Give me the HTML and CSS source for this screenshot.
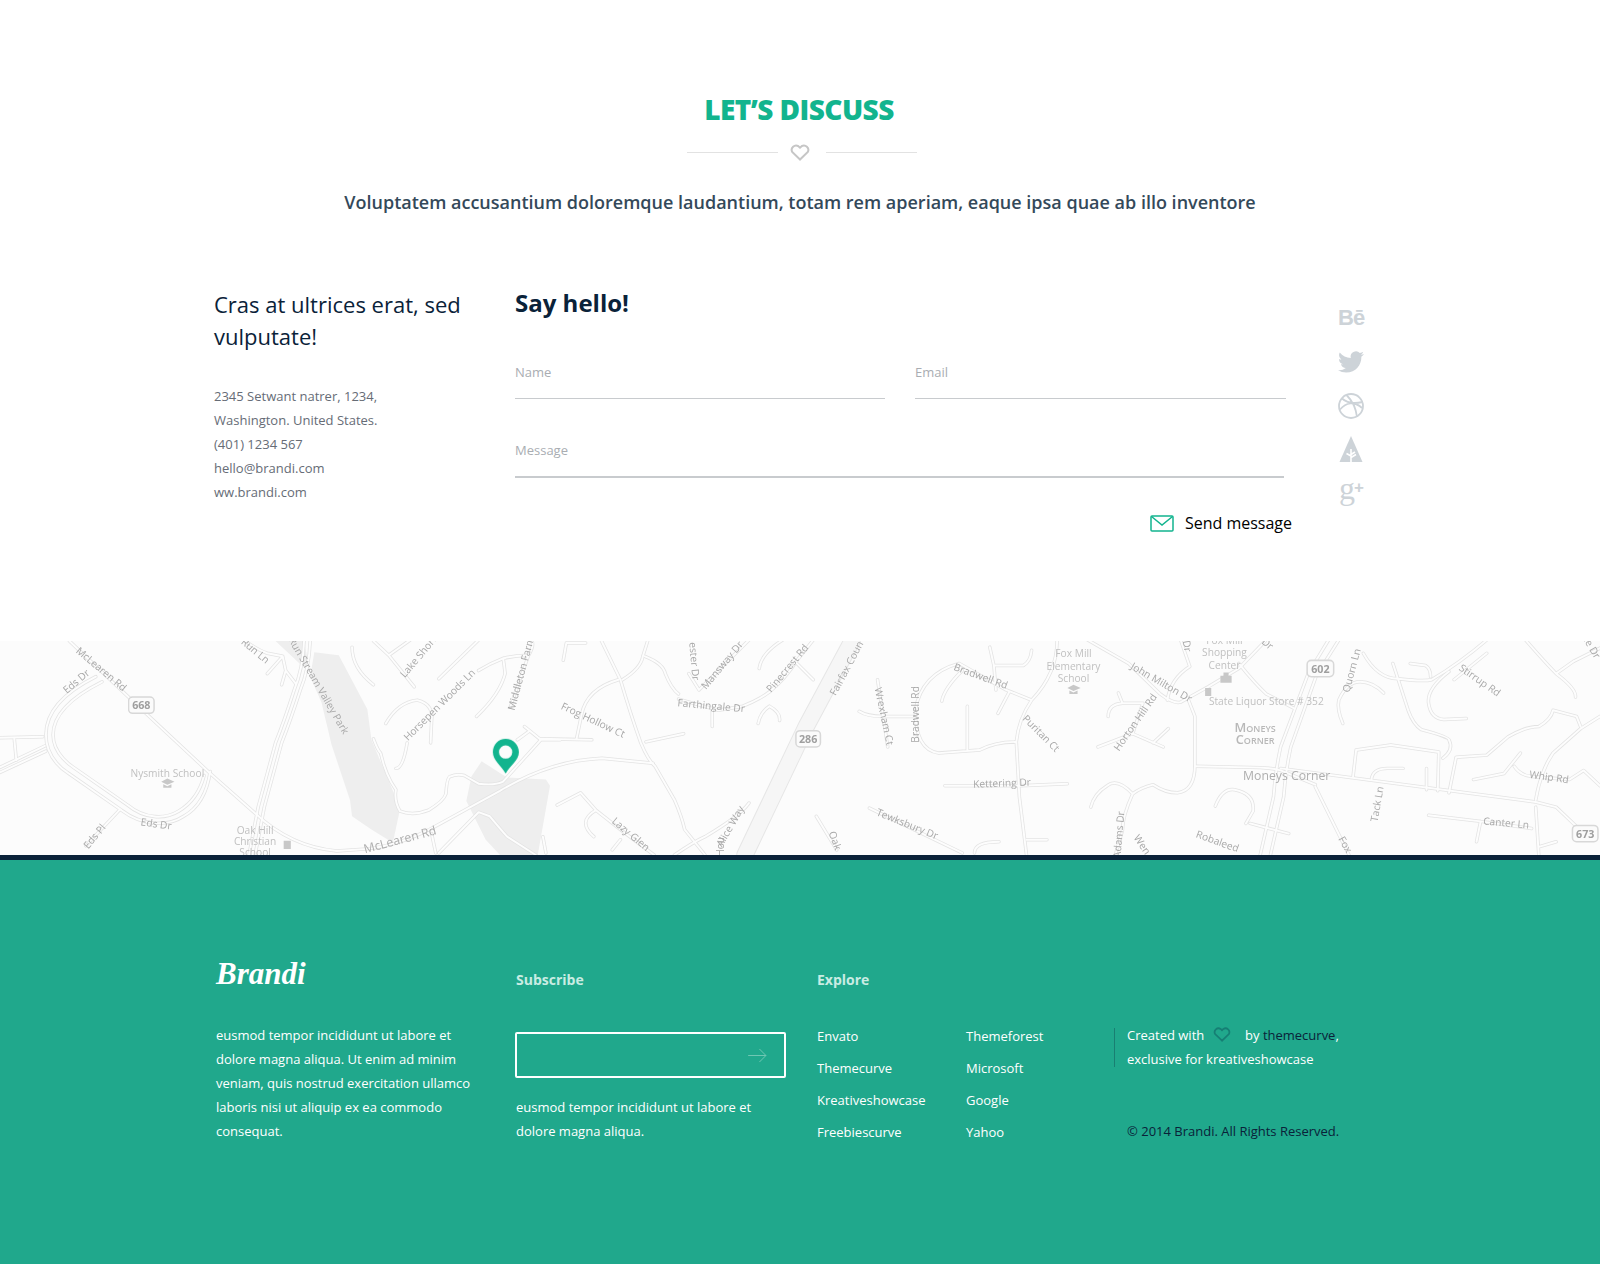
FILE: index.html
```html
<!DOCTYPE html>
<html lang="en">
<head>
<meta charset="utf-8">
<title>Brandi</title>
<link rel="stylesheet" href="styles.css">
</head>
<body>
<section class="discuss">
  <h2 class="discuss-title">LET’S DISCUSS</h2>
  <div class="divider">
    <span class="divider-line"></span>
    <svg class="divider-heart" viewBox="0 0 20 17"><path d="M10 15.5 2.2 8A4.4 4.4 0 0 1 8.4 2.2L10 3.7l1.6-1.5A4.4 4.4 0 0 1 17.8 8Z"/></svg>
    <span class="divider-line"></span>
  </div>
  <p class="discuss-sub">Voluptatem accusantium doloremque laudantium, totam rem aperiam, eaque ipsa quae ab illo inventore</p>
  <div class="contact">
    <div class="contact-info">
      <h3 class="contact-lead">Cras at ultrices erat, sed vulputate!</h3>
      <address class="contact-address">
        2345 Setwant natrer, 1234,<br>Washington. United States.<br>(401) 1234 567<br>hello@brandi.com<br>ww.brandi.com
      </address>
    </div>
    <form class="contact-form">
      <h3 class="form-title">Say hello!</h3>
      <div class="form-row">
        <input class="field" type="text" placeholder="Name">
        <input class="field" type="text" placeholder="Email">
      </div>
      <input class="field field-message" type="text" placeholder="Message">
      <div class="form-actions">
        <button class="send" type="button">
          <svg class="send-icon" viewBox="0 0 24 17"><rect x="1" y="1" width="22" height="15" rx="1"/><path d="M1.5 1.5 12 10 22.5 1.5"/></svg>
          Send message
        </button>
      </div>
    </form>
    <div class="social">
      <span class="social-item social-be">Bē</span>
      <svg class="social-item" viewBox="0 0 24 24"><path class="solid" d="M23.953 4.57a10 10 0 01-2.825.775 4.958 4.958 0 002.163-2.723c-.951.555-2.005.959-3.127 1.184a4.92 4.92 0 00-8.384 4.482C7.69 8.095 4.067 6.13 1.64 3.162a4.822 4.822 0 00-.666 2.475c0 1.71.87 3.213 2.188 4.096a4.904 4.904 0 01-2.228-.616v.06a4.923 4.923 0 003.946 4.827 4.996 4.996 0 01-2.212.085 4.936 4.936 0 004.604 3.417 9.867 9.867 0 01-6.102 2.105c-.39 0-.779-.023-1.17-.067a13.995 13.995 0 007.557 2.209c9.053 0 13.998-7.496 13.998-13.985 0-.21 0-.42-.015-.63A9.935 9.935 0 0024 4.59z"/></svg>
      <svg class="social-item" viewBox="0 0 26 26"><g class="line"><circle cx="13" cy="13" r="12"/><path d="M4 5.5c5 4.500 12 5.500 20.500 3.500M8.500 2c5 5 9.500 13 10.500 22M2 16.500c6-7 14-9 22-1.500"/></g></svg>
      <svg class="social-item social-forrst" viewBox="0 0 26 26"><path class="solid" d="M13 0 24.500 26H1.500Z"/><path class="cut" d="M13 26V13M13 21.500 18 18.500M13 18.500 17 16M13 20 8.500 17.500"/></svg>
      <span class="social-item social-gplus">g<sup class="plus">+</sup></span>
    </div>
  </div>
</section>

<section class="map">
  <svg class="map-canvas" viewBox="0 628 1568 210" preserveAspectRatio="none">
    <defs>
      <g id="roads">
        <path d="M68 628 128 685 205 757 250 797Q285 830 330 834L360 832Q395 828 430 808L490 775Q540 745 590 743L640 748"/>
        <path d="M94 663C60 680 45 700 45 720 45 745 66 757 66 757L119 794C140 810 165 810 180 800 198 790 204 770 206 756"/>
        <path d="M100 668C68 684 52 702 52 720 52 740 72 752 72 752L125 789C142 803 162 803 175 795 192 785 198 768 200 760"/>
        <path d="M0 723 42 722M0 757 45 736M0 752 44 731M14 724 16 745M84 829 117 794"/>
        <path d="M304 628Q303 655 294 677 285 705 276 728L259 791 250 838M298 628Q297 655 288 677 279 705 270 728L253 791 244 838"/>
        <path d="M240 628Q255 638 262 640L277 643M262 660 277 643 280 657 290 670M276 671 280 657"/>
        <path d="M345 634Q345 655 366 671M381 642 406 673M381 642 402 627M381 642 366 628M430 665 469 627"/>
        <path d="M378 709Q390 688 409 686 425 690 423 706L422 728"/>
        <path d="M467 702Q490 680 495 660 494 650 493 645 480 650 469 657M493 645Q505 642 518 642 524 632 521 627M518 642 500 693"/>
        <path d="M366 724Q370 735 373 738 378 760 388 774 386 785 392 795 405 800 420 794 435 785 437 778 438 762 441 761 448 758 455 760L469 768Q485 770 493 766L530 725H549M514 712 530 725M507 725 518 717M388 753Q395 753 399 728"/>
        <path d="M430 836 469 796 480 800Q490 812 497 820L525 838M423 817 427 836M532 820 535 836"/>
        <path d="M589 627 608 666Q618 700 628 728 635 745 642 751L661 784Q668 800 671 813L691 838"/>
        <path d="M606 666Q575 675 570 700L565 724M529 724 580 725M633 727 670 719M610 666Q628 655 630 643L635 627M632 643Q650 650 652 660 658 675 665 680"/>
        <path d="M665 685 704 696 728 692Q745 685 754 678 770 665 781 647L797 627M675 660 685 676 734 627M744 655Q746 640 767 627M781 650 797 666M754 692Q745 698 743 709M754 692Q765 698 764 706M698 696 698 712M552 647 555 630 574 630"/>
        <path d="M940 650Q903 660 897 696 897 735 920 738L960 735Q975 727 996 727M940 650 986 676 1011 686M1011 686Q998 705 996 727L999 781 1006 838M1011 686Q1036 660 1036 627M970 634 974 652H1003Q1010 648 1011 637M974 652 976 676M943 657Q925 675 923 687M989 678 978 699M948 692V735M842 697Q850 702 865 702H897M860 666 870 732M926 770H1000L1046 768M852 792 943 836M800 800 820 833"/>
        <path d="M546 789 569 777 584 794 608 813 641 838M584 794Q565 805 582 820M600 833 608 823M661 838Q680 825 691 820 725 800 734 787M955 836Q955 825 979 825M1006 823H1026"/>
        <path d="M1066 627 1106 650 1137 680Q1150 690 1157 688L1184 673 1214 655 1240 628M1214 650Q1230 670 1241 680L1268 694M1157 627 1166 653Q1147 665 1144 686"/>
        <path d="M1164 684 1171 702V750Q1171 775 1154 777 1142 777 1130 769 1118 772 1110 778 1100 800 1100 814L1093 838M1110 778Q1095 762 1085 770 1072 778 1069 791"/>
        <path d="M1171 751 1225 752Q1245 752 1255 755L1289 769M1255 753 1505 786 1525 791 1545 810"/>
        <path d="M1302 627 1282 660 1255 732Q1250 755 1248 781L1235 838M1312 627 1290 662 1265 732Q1260 755 1258 781L1245 838"/>
        <path d="M1289 771 1322 838M1191 790Q1198 772 1210 774 1230 778 1228 795L1221 807M1225 807 1263 817"/>
        <path d="M1076 732 1110 719 1140 732M1145 714 1130 728M1096 679 1100 689Q1086 690 1086 702M1100 689H1120M1110 719 1120 689"/>
        <path d="M1316 709Q1310 695 1312 686 1320 668 1333 668 1345 668 1356 679M1336 640Q1350 665 1370 665 1395 668 1403 666 1430 650 1457 627M1365 650 1370 665 1380 696Q1385 710 1393 715 1420 722 1420 725 1425 735 1414 743"/>
        <path d="M1329 735 1363 730 1410 737 1409 775M1329 735 1326 761M1344 764Q1345 753 1360 753H1375M1398 753V774"/>
        <path d="M1420 777 1427 742 1457 740 1478 722Q1495 712 1508 712 1520 705 1522 696L1545 702 1549 712M1444 764 1474 758 1490 738M1484 751Q1490 760 1501 761L1538 764 1552 755 1568 770"/>
        <path d="M1505 784Q1510 755 1522 738L1549 714 1568 702M1505 791 1508 838M1508 830 1525 825M1400 799 1451 805 1501 812M1451 805 1447 825"/>
        <path d="M1420 658Q1398 675 1400 689 1402 704 1415 705L1437 704M1425 666 1457 640M1495 627Q1515 650 1525 660 1545 675 1544 683M1542 648 1568 635M1525 660 1542 648M1382 650 1397 652Q1402 655 1402 663"/>
      </g>
    </defs>
    <g class="soft">
    <g class="park">
      <path d="M308 639 332 642 360 695 364 725 385 775 392 793 385 826 364 813 345 800 343 784 325 730 315 688 304 663ZM270 628H298L304 660Z"/>
      <path d="M472 746 497 762 535 764 539 770 527 838H490L476 823 457 785 462 761Z"/>
    </g>
    <path class="hw-edge" d="M835 628 790 712 730 838"/>
    <path class="hw-fill" d="M835 628 790 712 730 838"/>
    <use href="#roads" class="road-edge"/>
    <use href="#roads" class="road-fill"/>
    <g class="labels">
      <text x="99" y="659" transform="rotate(40 99 656)">McLearen Rd</text>
      <text x="75" y="671" transform="rotate(-40 75 668)">Eds Dr</text>
      <text x="153" y="811" transform="rotate(8 153 808)">Eds Dr</text>
      <text x="93" y="823" transform="rotate(-50 93 820)">Eds Pl</text>
      <text class="poi" x="164" y="761">Nysmith School</text>
      <text class="poi" x="250" y="817">Oak Hill</text>
      <text class="poi" x="250" y="828">Christian</text>
      <text class="poi" x="250" y="839">School</text>
      <text x="250" y="641" transform="rotate(40 250 638)">Run Ln</text>
      <text x="312" y="675" transform="rotate(60 312 672)">Run Stream Valley Park</text>
      <text x="411" y="646" transform="rotate(-50 411 643)">Lake Shore</text>
      <text x="431" y="694" transform="rotate(-45 431 691)">Horsepen Woods Ln</text>
      <text x="511" y="663" transform="rotate(-75 511 660)">Middleton Farm</text>
      <text x="581" y="709" transform="rotate(25 581 706)">Frog Hollow Ct</text>
      <text class="major" x="392" y="827" transform="rotate(-15 392 823)">McLearen Rd</text>
      <text x="618" y="821" transform="rotate(40 618 818)">Lazy Glen</text>
      <text x="716" y="813" transform="rotate(-60 716 810)">Alice Way</text>
      <text x="707" y="833" transform="rotate(-90 707 830)">Hou</text>
      <text x="680" y="651" transform="rotate(85 680 648)">ester Dr</text>
      <text x="708" y="655" transform="rotate(-50 708 652)">Mansway Dr</text>
      <text x="697" y="695" transform="rotate(5 697 692)">Farthingale Dr</text>
      <text x="772" y="658" transform="rotate(-50 772 655)">Pinecrest Rd</text>
      <text x="830" y="658" transform="rotate(-62 830 655)">Fairfax Coun</text>
      <text x="866" y="705" transform="rotate(78 866 702)">Wrexham Ct</text>
      <text x="898" y="703" transform="rotate(-90 898 700)">Bradwell Rd</text>
      <text x="961" y="666" transform="rotate(20 961 663)">Bradwell Rd</text>
      <text x="1020" y="722" transform="rotate(45 1020 719)">Puritan Ct</text>
      <text x="982" y="771" transform="rotate(-2 982 767)">Kettering Dr</text>
      <text x="889" y="811" transform="rotate(22 889 808)">Tewksbury Dr</text>
      <text x="818" y="827" transform="rotate(70 818 824)">Oak</text>
      <text class="poi" x="1052" y="644">Fox Mill</text>
      <text class="poi" x="1052" y="656">Elementary</text>
      <text class="poi" x="1052" y="668">School</text>
      <text class="poi" x="1200" y="631">Fox Mill</text>
      <text class="poi" x="1200" y="643">Shopping</text>
      <text class="poi" x="1200" y="655">Center</text>
      <text x="1138" y="672" transform="rotate(30 1138 669)">John Milton Dr</text>
      <text x="1113" y="711" transform="rotate(-55 1113 708)">Horton Hill Rd</text>
      <text x="1163" y="636" transform="rotate(80 1163 633)">Dr</text>
      <text class="poi" x="1241" y="691">State Liquor Store # 352</text>
      <text class="place" x="1230" y="717">Moneys</text>
      <text class="place" x="1230" y="729">Corner</text>
      <text class="major" x="1261" y="764">Moneys Corner</text>
      <text x="1325" y="660" transform="rotate(-75 1325 657)">Quorn Ln</text>
      <text x="1450" y="670" transform="rotate(35 1450 667)">Stirrup Rd</text>
      <text x="1518" y="765" transform="rotate(8 1518 762)">Whip Rd</text>
      <text x="1350" y="791" transform="rotate(-80 1350 788)">Tack Ln</text>
      <text x="1476" y="810" transform="rotate(5 1476 807)">Canter Ln</text>
      <text x="1097" y="821" transform="rotate(-85 1097 818)">Adams Dr</text>
      <text x="1119" y="831" transform="rotate(55 1119 828)">Wen</text>
      <text x="1193" y="828" transform="rotate(20 1193 825)">Robaleed</text>
      <text x="1318" y="831" transform="rotate(60 1318 828)">Fox</text>
      <text x="1242" y="634" transform="rotate(40 1242 631)">Dr</text>
      <text x="1560" y="638" transform="rotate(60 1560 635)">ie Dr</text>
    </g>
    <g class="shields">
      <rect x="126" y="683" width="25" height="16" rx="4"/><text x="138.500" y="695">668</text>
      <rect x="780" y="716" width="24" height="16" rx="4"/><text x="792" y="728">286</text>
      <rect x="1281" y="647" width="26" height="16" rx="4"/><text x="1294" y="659">602</text>
      <rect x="1541" y="809" width="25" height="16" rx="4"/><text x="1553.500" y="821">673</text>
    </g>
    <g class="map-icons">
      <path d="M158 766 164 763 171 766 164 769ZM160 768.500V772H168V768.500L164 770.500Z"/>
      <path d="M1046 674 1052 671 1059 674 1052 677ZM1048 676.500V680H1056V676.500L1052 678.500Z"/>
      <path d="M1196 662H1207V669H1196ZM1199 662V659H1204V662"/>
      <path d="M278 824H285V832H278ZM1181 674H1187V682H1181Z"/>
    </g>
    </g>
    <path class="pin" d="M495.500 724C488 724 483 730 483 737 483 745 491 750 495.500 758 500 750 508.500 745 508.500 737 508.500 730 503 724 495.500 724ZM495.500 730.500A6.500 6.500 0 1 1 495.500 743.500 6.500 6.500 0 0 1 495.500 730.500Z"/>
  </svg>
</section>

<footer class="footer">
  <div class="footer-grid">
    <div class="footer-col">
      <div class="brand">Brandi</div>
      <p class="footer-text">eusmod tempor incididunt ut labore et dolore magna aliqua. Ut enim ad minim veniam, quis nostrud exercitation ullamco laboris nisi ut aliquip ex ea commodo consequat.</p>
    </div>
    <div class="footer-col">
      <h4 class="footer-head">Subscribe</h4>
      <div class="subscribe">
        <svg class="subscribe-arrow" viewBox="0 0 20 16"><path d="M0 8H19M12 1l7 7-7 7"/></svg>
      </div>
      <p class="footer-text">eusmod tempor incididunt ut labore et dolore magna aliqua.</p>
    </div>
    <div class="footer-col">
      <h4 class="footer-head">Explore</h4>
      <ul class="explore">
        <li>Envato</li><li>Themeforest</li>
        <li>Themecurve</li><li>Microsoft</li>
        <li>Kreativeshowcase</li><li>Google</li>
        <li>Freebiescurve</li><li>Yahoo</li>
      </ul>
    </div>
    <div class="footer-credits">
      <p class="credit">Created with <svg class="credit-heart" viewBox="0 0 20 17"><path d="M10 15.500 2.200 8A4.400 4.400 0 0 1 8.400 2.200L10 3.700l1.600-1.500A4.400 4.400 0 0 1 17.800 8Z"/></svg> by <span class="dark">themecurve</span>, exclusive for kreativeshowcase</p>
      <p class="copyright">© 2014 Brandi. All Rights Reserved.</p>
    </div>
  </div>
</footer>
</body>
</html>
```
FILE: styles.css
```css
* { box-sizing: border-box; }
html, body { margin: 0; padding: 0; }
body { width: 1600px; height: 1264px; overflow: hidden; background: #fff; font-family: "Open Sans", sans-serif; color: #0a2239; }
h2, h3, h4, p, ul, address { margin: 0; padding: 0; font-style: normal; }

.discuss { height: 641px; padding-top: 89px; }
.discuss-title { text-align: center; font-size: 28px; line-height: 40px; font-weight: 800; color: #12b48e; letter-spacing: -0.55px; padding-right: 2px; }
.divider { display: flex; justify-content: center; align-items: center; height: 20px; margin-top: 13px; padding-left: 4px; }
.divider-line { width: 91px; height: 1px; background: #e2e2e2; }
.divider-heart { width: 20px; height: 17px; margin: 0 16px 0 12px; fill: none; stroke: #c6c6c6; stroke-width: 2; }
.discuss-sub { text-align: center; font-size: 18px; line-height: 24px; font-weight: 600; color: #34495a; margin-top: 28px; }

.contact { display: flex; padding-left: 214px; margin-top: 73px; }
.contact-info { width: 301px; padding-top: 1px; }
.contact-lead { font-size: 22px; line-height: 32px; font-weight: 400; color: #0a2239; width: 260px; }
.contact-address { font-size: 13px; line-height: 24px; color: #666c76; margin-top: 32px; }
.contact-form { width: 777px; }
.form-title { font-size: 24px; line-height: 32px; font-weight: 700; color: #0a2239; }
.form-row { display: grid; grid-template-columns: 370px 371px; column-gap: 30px; margin-top: 42px; }
.field { display: block; width: 100%; border: 0; border-bottom: 1px solid #c8cbce; background: transparent; padding: 0 0 15px; height: 38px; font: 400 13px/20px "Open Sans", sans-serif; color: #0a2239; outline: none; }
.field::placeholder { color: #a9adb2; opacity: 1; }
.field-message { width: 769px; height: 40px; border-bottom-width: 2px; margin-top: 39px; }
.form-actions { display: flex; justify-content: flex-end; margin-top: 33px; }
.send { display: flex; align-items: center; gap: 11px; border: 0; background: none; padding: 0; font: 400 16px/24px "Open Sans", sans-serif; color: #000; }
.send-icon { width: 24px; height: 17px; fill: none; stroke: #12b48e; stroke-width: 1.5; }

.social { display: flex; flex-direction: column; align-items: center; width: 30px; margin-left: 44px; margin-top: 18px; }
.social-item { width: 26px; height: 26px; margin-bottom: 18px; display: block; text-align: center; color: #cdd3d8; }
.social-item .solid { fill: #cdd3d8; }
.social-item .line { fill: none; stroke: #cdd3d8; stroke-width: 1.8; }
.social-item .cut { fill: none; stroke: #fff; stroke-width: 1.6; }
.social-be { font: 700 22px/26px "Liberation Sans", sans-serif; letter-spacing: -1px; white-space: nowrap; }
.social-forrst { margin-top: -1px; margin-bottom: 16px; }
.social-gplus { font: 400 32px/20px "Liberation Serif", serif; letter-spacing: -1px; white-space: nowrap; }
.plus { font: 700 17px/0 "Liberation Sans", sans-serif; vertical-align: 6px; }

.map { height: 214px; background: #fcfcfc; }
.map-canvas { display: block; width: 1600px; height: 214px; }
.soft { filter: blur(0.35px); }
.park { fill: #eeeeee; }
.hw-edge, .hw-fill, .road-edge, .road-fill { fill: none; stroke-linejoin: round; stroke-linecap: round; }
.hw-edge { stroke: #e6e6e6; stroke-width: 17; }
.hw-fill { stroke: #f6f6f6; stroke-width: 15; }
.road-edge { stroke: #e3e3e3; stroke-width: 3.4; }
.road-fill { stroke: #fdfdfd; stroke-width: 1.9; }
.labels text { font: 400 10px "Open Sans", sans-serif; fill: #a8a8a8; text-anchor: middle; }
.labels .poi { fill: #c0c0c0; }
.labels .major { font-size: 12px; fill: #aeaeae; }
.labels .place { font-size: 12.500px; font-weight: 600; font-variant: small-caps; fill: #b8b8b8; }
.shields rect { fill: #fbfbfb; stroke: #d8d8d8; stroke-width: 1.500; }
.shields text { font: 700 10.500px "Open Sans", sans-serif; fill: #9f9f9f; text-anchor: middle; }
.map-icons { fill: #c8c8c8; }
.pin { fill: #12b48e; fill-rule: evenodd; }

.footer { height: 409px; background: #20a88c; border-top: 5px solid #0a2239; padding: 90px 0 0 216px; color: #fff; }
.footer-grid { display: grid; grid-template-columns: 300px 301px 297px 220px; }
.brand { font: italic 700 31px/40px "Liberation Serif", cursive; color: #fff; height: 40px; margin-top: 4px; }
.footer-text { font-size: 13px; line-height: 24px; color: #fff; }
.footer-col > .footer-text { width: 262px; }
.brand + .footer-text { margin-top: 29px; }
.footer-head { font-size: 14px; line-height: 24px; font-weight: 700; color: #c9ece3; margin-top: 18px; }
.subscribe { display: flex; align-items: center; justify-content: flex-end; width: 271px; height: 46px; border: 2px solid #fff; border-radius: 2px; margin-top: 40px; margin-left: -1px; padding-right: 17px; }
.subscribe-arrow { width: 19px; height: 15px; fill: none; stroke: #74c9b5; stroke-width: 1; }
.subscribe + .footer-text { margin-top: 17px; }
.explore { list-style: none; display: grid; grid-template-columns: 149px 110px; grid-auto-rows: 32px; margin-top: 32px; font-size: 13px; line-height: 24px; }
.footer-credits { margin-top: 73px; margin-left: 13px; }
.credit { position: relative; font-size: 13px; line-height: 24px; width: 230px; }
.credit::before { content: ""; position: absolute; left: -13px; top: 5px; width: 1px; height: 39px; background: rgba(10, 34, 57, .3); }
.credit-heart { width: 18px; height: 15px; margin: 0 11px 0 5px; vertical-align: -2px; fill: none; stroke: #167f74; stroke-width: 2; }
.dark { color: #0a2239; }
.copyright { font-size: 13px; line-height: 24px; color: #0a2239; margin-top: 48px; white-space: nowrap; }
```
